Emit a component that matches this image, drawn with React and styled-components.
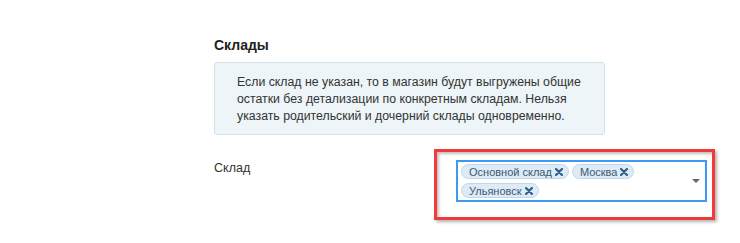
import React from "react";
import styled, { createGlobalStyle } from "styled-components";

const GlobalStyle = createGlobalStyle`
  html, body {
    margin: 0;
    padding: 0;
    background: #fff;
    font-family: "Liberation Sans", Arial, Helvetica, sans-serif;
    color: #333;
  }
`;

const Page = styled.div`
  width: 740px;
  height: 243px;
  box-sizing: border-box;
  padding: 37px 0 0 214px;
`;

const Title = styled.h3`
  margin: 0 0 9px;
  font-size: 14px;
  font-weight: bold;
  color: #222;
  line-height: 16px;
`;

const InfoBox = styled.div`
  box-sizing: border-box;
  width: 391px;
  height: 73px;
  padding: 11px 10px 0 22px;
  background: #edf5f8;
  border: 1px solid #d3e2e8;
  border-radius: 3px;
  font-size: 12.3px;
  line-height: 17px;
  color: #333;
  white-space: nowrap;
`;

const Row = styled.div`
  display: flex;
  align-items: flex-start;
  margin-top: 14px;
`;

const Label = styled.div`
  width: 220px;
  padding-top: 12px;
  font-size: 12.5px;
  color: #333;
`;

const Highlight = styled.div`
  box-sizing: border-box;
  width: 281px;
  height: 71px;
  padding: 8px 5px 0 19px;
  border: 3px solid #f23a3a;
  box-shadow: 2px 2px 3px rgba(0, 0, 0, 0.3), inset 2px 2px 3px rgba(0, 0, 0, 0.25);
`;

const Select = styled.div`
  box-sizing: border-box;
  position: relative;
  width: 251px;
  height: 42px;
  border: 2px solid #3b9af2;
  background: #fff;
  padding: 2px 30px 0 3px;
  display: flex;
  flex-wrap: wrap;
  align-content: flex-start;
  gap: 4px 3px;
`;

const Tag = styled.span`
  display: inline-flex;
  align-items: center;
  height: 15px;
  box-sizing: border-box;
  padding: 0 5px 0 7px;
  background: #dcebf6;
  border: 1px solid #c1d8ea;
  border-radius: 8px;
  font-size: 11px;
  color: #3d5873;
  white-space: nowrap;
`;

const Remove = styled.svg`
  margin-left: 3px;
  width: 8px;
  height: 8px;
`;

const Caret = styled.span`
  position: absolute;
  right: 5px;
  top: 17px;
  width: 0;
  height: 0;
  border-left: 4px solid transparent;
  border-right: 4px solid transparent;
  border-top: 4px solid #666;
`;

const tags = ["Основной склад", "Москва", "Ульяновск"];

const App = () => (
  <Page>
    <GlobalStyle />
    <Title>Склады</Title>
    <InfoBox>
      Если склад не указан, то в магазин будут выгружены общие
      <br />
      остатки без детализации по конкретным складам. Нельзя
      <br />
      указать родительский и дочерний склады одновременно.
    </InfoBox>
    <Row>
      <Label>Склад</Label>
      <Highlight>
        <Select>
          {tags.map((t) => (
            <Tag key={t}>
              {t}
              <Remove viewBox="0 0 8 8">
                <path d="M1 1L7 7M7 1L1 7" stroke="#2f5f8a" strokeWidth="2.2" strokeLinecap="round" />
              </Remove>
            </Tag>
          ))}
          <Caret />
        </Select>
      </Highlight>
    </Row>
  </Page>
);

export default App;
